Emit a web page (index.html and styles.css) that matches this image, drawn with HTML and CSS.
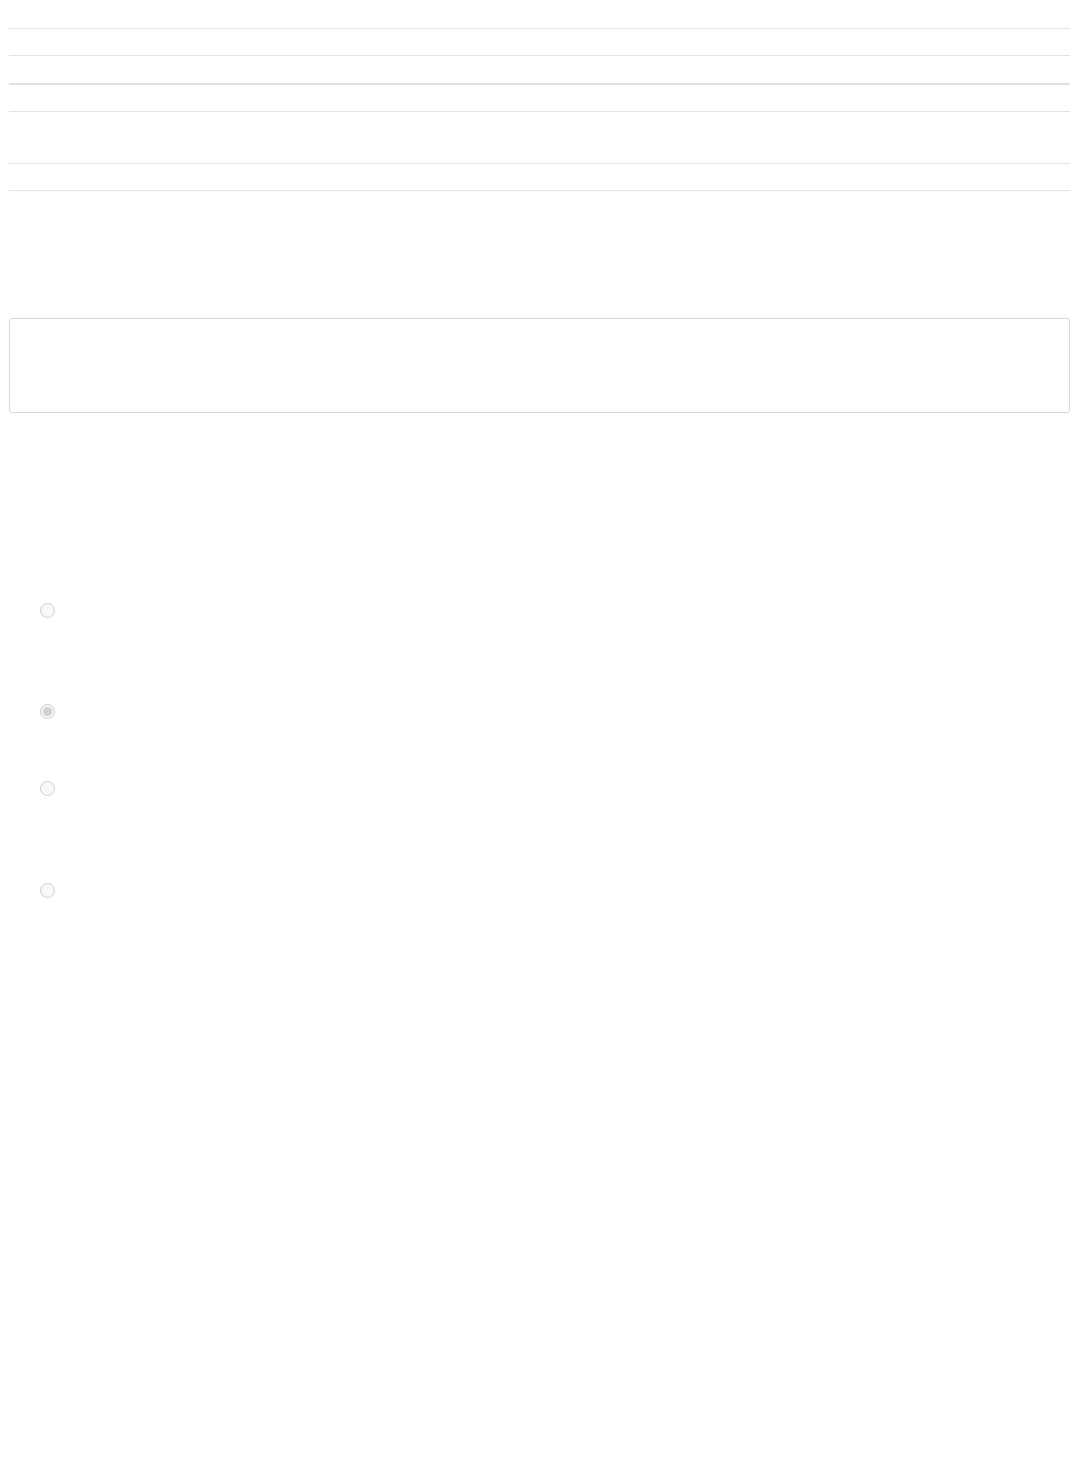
FILE: index.html
```html
<!DOCTYPE html>
<html lang="en">
<head>
  <meta charset="UTF-8">
  <meta name="viewport" content="width=device-width, initial-scale=1.0">
  <title>Form</title>
  <link rel="stylesheet" href="styles.css">
</head>
<body>
  <div class="page">
    <div class="rows">
      <div class="row row-head"></div>
      <div class="row"></div>
      <div class="row row-strong"></div>
      <div class="row"></div>
      <div class="row row-tall"></div>
      <div class="row"></div>
    </div>

    <div class="answer-box"></div>

    <form class="options">
      <label class="option option-a"><input type="radio" name="opt" disabled></label>
      <label class="option option-b"><input type="radio" name="opt" disabled checked></label>
      <label class="option option-c"><input type="radio" name="opt" disabled></label>
      <label class="option option-d"><input type="radio" name="opt" disabled></label>
    </form>
  </div>
</body>
</html>
```

FILE: styles.css
```css
* {
  box-sizing: border-box;
}

body {
  margin: 0;
  font-family: "Liberation Sans", Arial, sans-serif;
  background-color: #ffffff;
}

.page {
  padding: 0 8px 0 9px;
  min-height: 1481px;
}

.row {
  height: 27px;
  border-bottom: 1px solid #e3e3e3;
}

.row-head {
  height: 29px;
}

.row-strong {
  height: 29px;
  border-bottom: 2px solid #dfe2e6;
}

.row-tall {
  height: 52px;
}

.answer-box {
  margin-top: 127px;
  height: 95px;
  border: 1px solid #d3d7de;
  border-radius: 3px;
}

.options {
  margin-top: 190px;
  padding-left: 31px;
}

.option {
  display: block;
}

.option input {
  width: 15px;
  height: 15px;
  margin: 0;
  display: block;
}

.option-a {
  height: 101px;
}

.option-b {
  height: 77px;
}

.option-c {
  height: 102px;
}
```
